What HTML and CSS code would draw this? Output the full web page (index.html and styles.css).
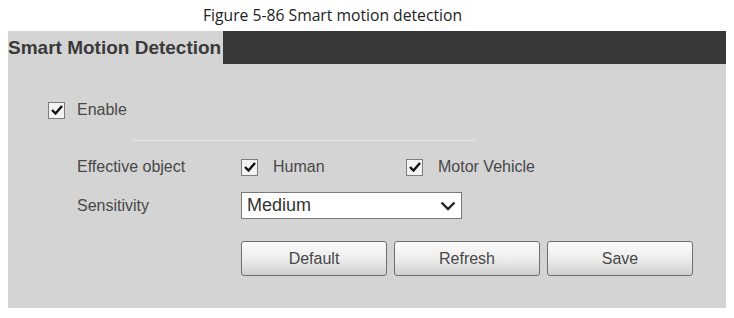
FILE: index.html
```html
<!DOCTYPE html>
<html>
<head>
    <title>Smart Motion Detection</title>
    <link rel="stylesheet" href="styles.css">
</head>
<body>
    <div class="caption">Figure 5-86 Smart motion detection</div>

    <div class="panel">
        <div class="panel-head">
            <div class="panel-title">Smart Motion Detection</div>
            <div class="panel-bar"></div>
        </div>

        <div class="row enable-row">
            <span class="check"><svg width="12" height="10" viewBox="0 0 12 10"><path d="M1 5 L4.5 8.5 L11 1" fill="none" stroke="#111" stroke-width="2.4"/></svg></span>
            <span class="check-text">Enable</span>
        </div>

        <div class="divider"></div>

        <div class="row field-row">
            <span class="label">Effective object</span>
            <span class="check"><svg width="12" height="10" viewBox="0 0 12 10"><path d="M1 5 L4.5 8.5 L11 1" fill="none" stroke="#111" stroke-width="2.4"/></svg></span>
            <span class="option-text human">Human</span>
            <span class="check"><svg width="12" height="10" viewBox="0 0 12 10"><path d="M1 5 L4.5 8.5 L11 1" fill="none" stroke="#111" stroke-width="2.4"/></svg></span>
            <span class="option-text">Motor Vehicle</span>
        </div>

        <div class="row sens-row">
            <span class="label">Sensitivity</span>
            <div class="select">
                <span>Medium</span>
                <svg width="16" height="10" viewBox="0 0 16 10"><path d="M1.5 1.5 L8 8 L14.5 1.5" fill="none" stroke="#222" stroke-width="2.4"/></svg>
            </div>
        </div>

        <div class="row buttons">
            <button class="btn" type="button">Default</button>
            <button class="btn" type="button">Refresh</button>
            <button class="btn" type="button">Save</button>
        </div>
    </div>
</body>
</html>
```

FILE: styles.css
```css
body {
    margin: 0;
    background: #fff;
    font-family: "Liberation Sans", Arial, sans-serif;
    color: #484848;
}
.caption {
    font-family: "Open Sans", "Noto Sans", sans-serif;
    font-size: 15.7px;
    color: #222;
    height: 31px;
    line-height: 31px;
    padding-left: 203px;
}
.panel {
    margin: 0 8px;
    height: 277px;
    background: #d4d4d4;
}
.panel-head {
    display: flex;
    height: 33px;
}
.panel-title {
    font-size: 19px;
    font-weight: bold;
    color: #3a3a3a;
    line-height: 33px;
    width: 215px;
}
.panel-bar {
    flex: 1;
    background: #383838;
}
.row {
    display: flex;
    align-items: center;
    font-size: 16px;
}
.enable-row {
    margin-top: 37px;
    padding-left: 40px;
    height: 18px;
}
.check {
    width: 15px;
    height: 15px;
    border: 1px solid #7c7c7c;
    background: #f2f2f2;
    display: flex;
    align-items: center;
    justify-content: center;
    flex-shrink: 0;
}
.check-text {
    margin-left: 12px;
}
.divider {
    height: 1px;
    background: #e8e8e8;
    width: 342px;
    margin: 21px 0 0 125px;
}
.field-row {
    margin-top: 16px;
    padding-left: 69px;
    height: 20px;
}
.label {
    width: 164px;
    flex-shrink: 0;
}
.option-text {
    margin-left: 15px;
}
.human {
    width: 133px;
}
.sens-row {
    margin-top: 15px;
    padding-left: 69px;
    height: 27px;
}
.select {
    width: 209px;
    height: 25px;
    border: 1px solid #7a7a7a;
    background: #fff;
    display: flex;
    align-items: center;
    justify-content: space-between;
    padding: 0 5px;
    font-size: 18px;
    color: #333;
}
.buttons {
    margin-top: 22px;
    padding-left: 233px;
    gap: 7px;
}
.btn {
    width: 146px;
    height: 35px;
    border: 1px solid #6e6e6e;
    border-radius: 3px;
    background: linear-gradient(#fbfbfb, #ececec 55%, #cfcfcf);
    font-family: "Liberation Sans", Arial, sans-serif;
    font-size: 16px;
    color: #484848;
    padding: 0;
}
```
